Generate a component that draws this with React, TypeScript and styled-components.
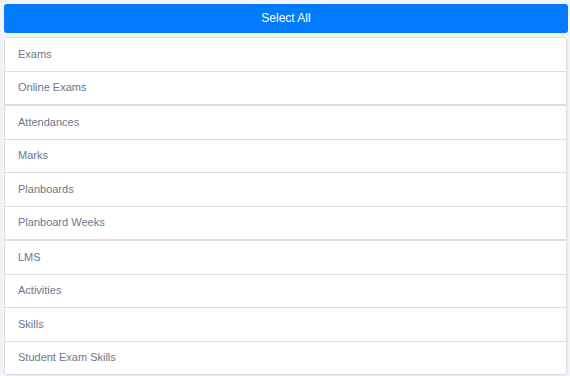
import React from 'react';
import styled, { createGlobalStyle } from 'styled-components';

//Styles
const GlobalStyle = createGlobalStyle`
  html, body {
    margin: 0;
    padding: 0;
    background: #f2f3f7;
  }
  body {
    font-family: 'Liberation Sans', Arial, sans-serif;
  }
`;
const Page = styled.div`
  width: 564px;
  padding: 4px 2px 2px 4px;
  display: flex;
  flex-direction: column;
  gap: 4px;
`;
const SelectAllButton = styled.button`
  height: 29px;
  width: 564px;
  padding: 0 0 1px;
  border: none;
  border-radius: 3px;
  background: #037bfd;
  color: #ffffff;
  font-family: 'Liberation Sans', Arial, sans-serif;
  font-size: 12px;
  cursor: pointer;
`;
const ListCard = styled.div`
  width: 563px;
  display: flex;
  flex-direction: column;
  border-radius: 3px;
  background: #ffffff;
  box-shadow: 1px 1px 0 rgba(0, 0, 0, 0.03);
`;
const Group = styled.ul<{ $first?: boolean; $last?: boolean }>`
  list-style: none;
  margin: 0;
  padding: 0;
  border: 1px solid #dedede;
  border-radius: ${(p) => (p.$first ? '3px 3px 0 0' : p.$last ? '0 0 3px 3px' : '0')};
`;
const Row = styled.li`
  height: 31.5px;
  display: flex;
  align-items: center;
  padding: 0 13px 1px;
  font-size: 11px;
  color: #6a788c;
  border-top: 1px solid #dedede;
  &:first-child {
    border-top: none;
  }
`;

//Data
const groups: string[][] = [
  ['Exams', 'Online Exams'],
  ['Attendances', 'Marks', 'Planboards', 'Planboard Weeks'],
  ['LMS', 'Activities', 'Skills', 'Student Exam Skills'],
];

//JSX
const App = () => {
  return (
    <>
      <GlobalStyle />
      <Page>
        <SelectAllButton>Select All</SelectAllButton>
        <ListCard>
          {groups.map((items, i) => (
            <Group key={i} $first={i === 0} $last={i === groups.length - 1}>
              {items.map((item) => (
                <Row key={item}>{item}</Row>
              ))}
            </Group>
          ))}
        </ListCard>
      </Page>
    </>
  );
};

export default App;
